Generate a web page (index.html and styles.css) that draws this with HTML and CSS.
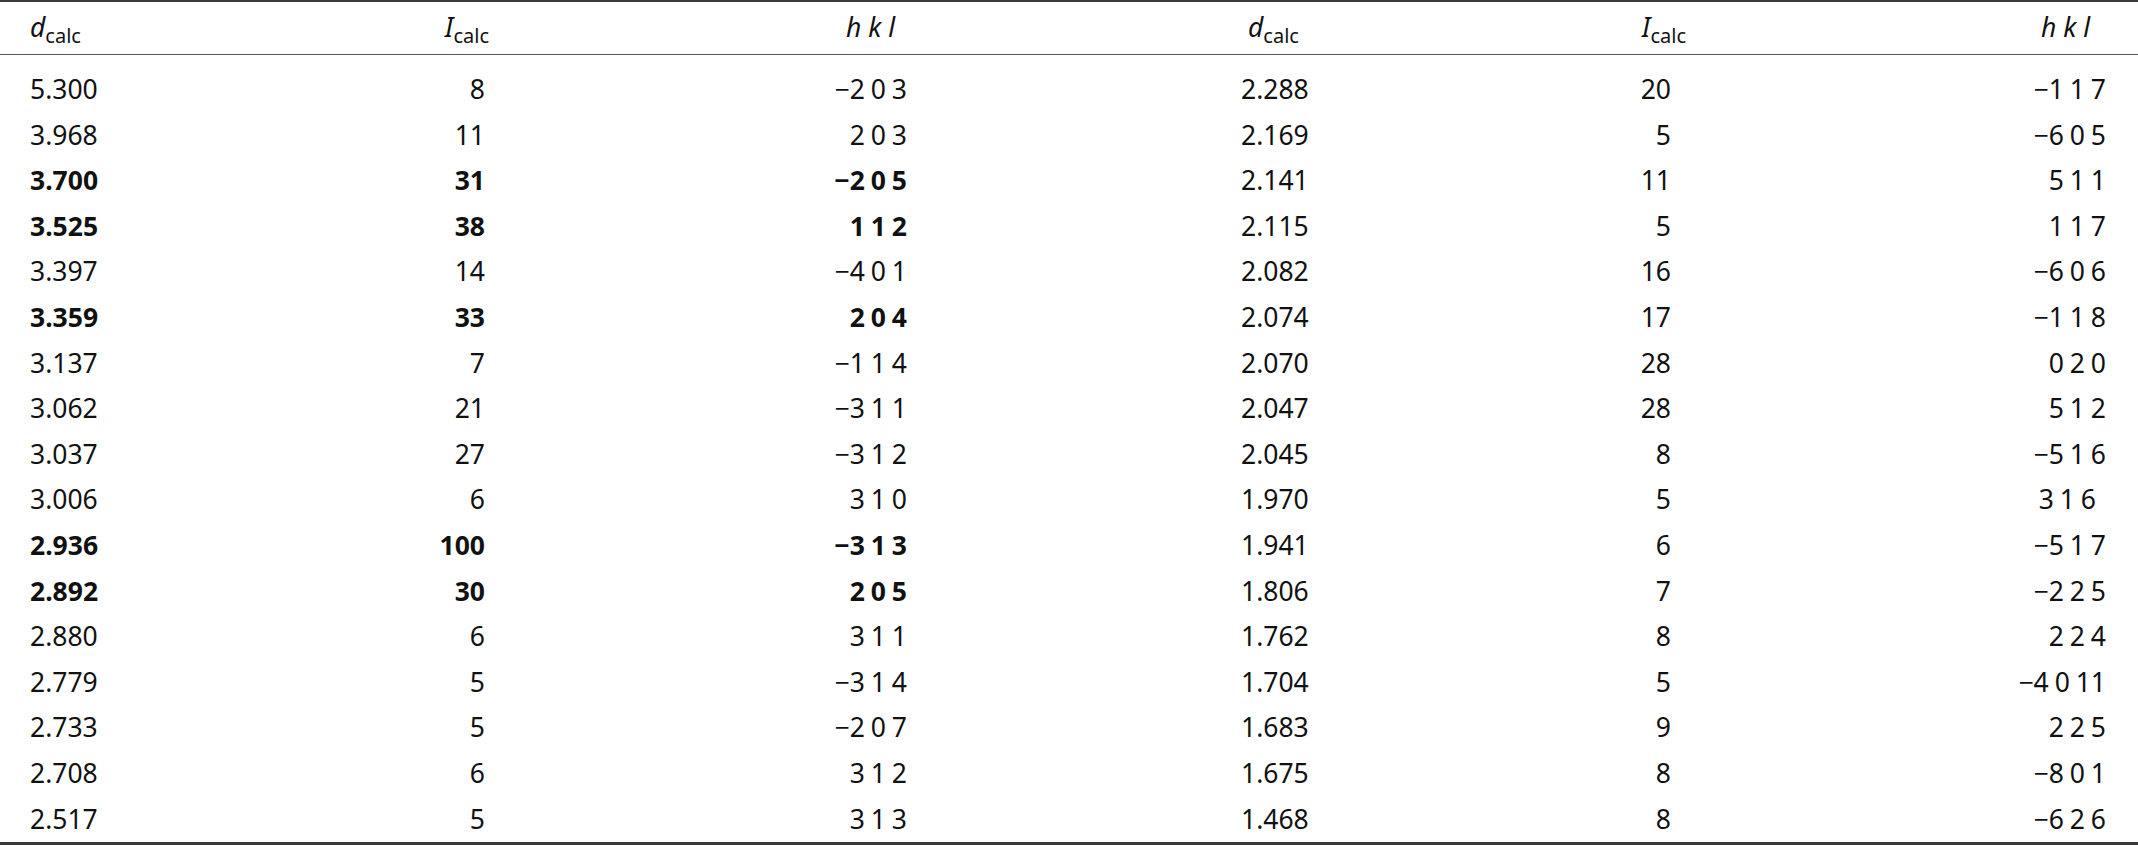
FILE: index.html
```html
<!DOCTYPE html>
<html>
<head>
<meta charset="utf-8">
<link rel="stylesheet" href="styles.css">
</head>
<body>
<table class="tbl">
<colgroup>
<col class="c1"><col class="c2"><col class="c3"><col class="c4"><col class="c5"><col class="c6">
</colgroup>
<thead>
<tr>
<th class="h1"><i>d</i><sub>calc</sub></th>
<th class="h2"><i>I</i><sub>calc</sub></th>
<th class="h3"><i>h k l</i></th>
<th class="h4"><i>d</i><sub>calc</sub></th>
<th class="h5"><i>I</i><sub>calc</sub></th>
<th class="h6"><i>h k l</i></th>
</tr>
</thead>
<tbody>
<tr class="first"><td class="d1">5.300</td><td class="d2">8</td><td class="d3">−2 0 3</td><td class="d4">2.288</td><td class="d5">20</td><td class="d6">−1 1 7</td></tr>
<tr><td class="d1">3.968</td><td class="d2">11</td><td class="d3">2 0 3</td><td class="d4">2.169</td><td class="d5">5</td><td class="d6">−6 0 5</td></tr>
<tr><td class="d1 b">3.700</td><td class="d2 b">31</td><td class="d3 b">−2 0 5</td><td class="d4">2.141</td><td class="d5">11</td><td class="d6">5 1 1</td></tr>
<tr><td class="d1 b">3.525</td><td class="d2 b">38</td><td class="d3 b">1 1 2</td><td class="d4">2.115</td><td class="d5">5</td><td class="d6">1 1 7</td></tr>
<tr><td class="d1">3.397</td><td class="d2">14</td><td class="d3">−4 0 1</td><td class="d4">2.082</td><td class="d5">16</td><td class="d6">−6 0 6</td></tr>
<tr><td class="d1 b">3.359</td><td class="d2 b">33</td><td class="d3 b">2 0 4</td><td class="d4">2.074</td><td class="d5">17</td><td class="d6">−1 1 8</td></tr>
<tr><td class="d1">3.137</td><td class="d2">7</td><td class="d3">−1 1 4</td><td class="d4">2.070</td><td class="d5">28</td><td class="d6">0 2 0</td></tr>
<tr><td class="d1">3.062</td><td class="d2">21</td><td class="d3">−3 1 1</td><td class="d4">2.047</td><td class="d5">28</td><td class="d6">5 1 2</td></tr>
<tr><td class="d1">3.037</td><td class="d2">27</td><td class="d3">−3 1 2</td><td class="d4">2.045</td><td class="d5">8</td><td class="d6">−5 1 6</td></tr>
<tr><td class="d1">3.006</td><td class="d2">6</td><td class="d3">3 1 0</td><td class="d4">1.970</td><td class="d5">5</td><td class="d6 off">3 1 6</td></tr>
<tr><td class="d1 b">2.936</td><td class="d2 b">100</td><td class="d3 b">−3 1 3</td><td class="d4">1.941</td><td class="d5">6</td><td class="d6">−5 1 7</td></tr>
<tr><td class="d1 b">2.892</td><td class="d2 b">30</td><td class="d3 b">2 0 5</td><td class="d4">1.806</td><td class="d5">7</td><td class="d6">−2 2 5</td></tr>
<tr><td class="d1">2.880</td><td class="d2">6</td><td class="d3">3 1 1</td><td class="d4">1.762</td><td class="d5">8</td><td class="d6">2 2 4</td></tr>
<tr><td class="d1">2.779</td><td class="d2">5</td><td class="d3">−3 1 4</td><td class="d4">1.704</td><td class="d5">5</td><td class="d6">−4 0 11</td></tr>
<tr><td class="d1">2.733</td><td class="d2">5</td><td class="d3">−2 0 7</td><td class="d4">1.683</td><td class="d5">9</td><td class="d6">2 2 5</td></tr>
<tr><td class="d1">2.708</td><td class="d2">6</td><td class="d3">3 1 2</td><td class="d4">1.675</td><td class="d5">8</td><td class="d6">−8 0 1</td></tr>
<tr><td class="d1">2.517</td><td class="d2">5</td><td class="d3">3 1 3</td><td class="d4">1.468</td><td class="d5">8</td><td class="d6">−6 2 6</td></tr>
</tbody>
</table>
</body>
</html>
```

FILE: styles.css
```css
html, body {
  margin: 0;
  padding: 0;
  background: #fff;
}

.tbl {
  width: 2138px;
  table-layout: fixed;
  border-collapse: separate;
  border-spacing: 0;
  border-top: 2px solid #3a3a3a;
  border-bottom: 3px solid #3a3a3a;
  font-family: "Noto Sans", "Open Sans", sans-serif;
  font-size: 26.5px;
  color: #111;
}

.c1 { width: 300px; }
.c2 { width: 200px; }
.c3 { width: 420px; }
.c4 { width: 580px; }
.c5 { width: 200px; }
.c6 { width: 438px; }

.tbl th {
  font-weight: normal;
  height: 52px;
  padding: 0;
  line-height: 50px;
  vertical-align: top;
  border-bottom: 1px solid #555;
  white-space: nowrap;
}

.tbl th i {
  font-style: italic;
}

.tbl sub {
  font-size: 20px;
  vertical-align: -6px;
  line-height: 0;
}

.h1 { text-align: left; padding-left: 30px !important; }
.h2 { text-align: right; padding-right: 11px !important; }
.h3 { text-align: right; padding-right: 25px !important; }
.h4 { text-align: left; padding-left: 328px !important; }
.h5 { text-align: right; padding-right: 14px !important; }
.h6 { text-align: right; padding-right: 48px !important; }

.tbl td {
  padding: 0;
  line-height: 45.6px;
  height: 45.6px;
  white-space: nowrap;
  word-spacing: -1px;
}

.tbl tr.first td {
  padding-top: 12px;
}

.d1 { text-align: left; padding-left: 30px !important; }
.d2 { text-align: right; padding-right: 15px !important; }
.d3 { text-align: right; padding-right: 13px !important; }
.d4 { text-align: left; padding-left: 321px !important; }
.d5 { text-align: right; padding-right: 29px !important; }
.d6 { text-align: right; padding-right: 32px !important; }
.d6.off { padding-right: 42px !important; }

.b { font-weight: bold; }
```
